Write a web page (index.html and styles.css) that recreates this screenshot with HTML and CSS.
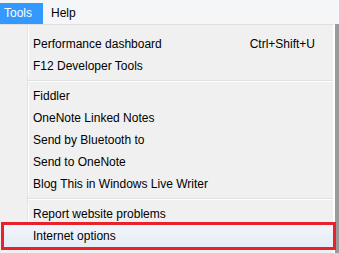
FILE: index.html
```html
<!DOCTYPE html>
<html>
<head>
<meta charset="utf-8">
<link rel="stylesheet" href="styles.css">
</head>
<body>
<div class="menubar">
  <span class="top-item active">Tools</span>
  <span class="top-item">Help</span>
</div>
<div class="menu-shadow">
  <div class="menu">
    <div class="item"><span>Performance dashboard</span><span class="shortcut">Ctrl+Shift+U</span></div>
    <div class="item"><span>F12 Developer Tools</span></div>
    <div class="sep"></div>
    <div class="item"><span>Fiddler</span></div>
    <div class="item"><span>OneNote Linked Notes</span></div>
    <div class="item"><span>Send by Bluetooth to</span></div>
    <div class="item"><span>Send to OneNote</span></div>
    <div class="item"><span>Blog This in Windows Live Writer</span></div>
    <div class="sep"></div>
    <div class="item"><span>Report website problems</span></div>
    <div class="item hover"><span>Internet options</span></div>
  </div>
</div>
</body>
</html>
```
FILE: styles.css
```css
html, body {
  margin: 0;
  padding: 0;
}
body {
  width: 339px;
  height: 253px;
  overflow: hidden;
  background: #a3a3a3;
  font-family: "Liberation Sans", Arial, sans-serif;
  font-size: 12px;
  color: #000;
}
.menubar {
  height: 24px;
  background: #f5f6f7;
  display: flex;
  align-items: flex-end;
}
.top-item {
  height: 21px;
  line-height: 21px;
  padding: 0 7px 0 4px;
}
.top-item.active {
  background: #3399ff;
  color: #fff;
  width: 32px;
}
.top-item + .top-item {
  padding-left: 8px;
}
.menu-shadow {
  padding: 0 4px 3px 0;
  background: linear-gradient(to right, #b8b8b8, #9a9a9a);
}
.menu {
  width: 333px;
  height: 225px;
  border-top: 1px solid #e0e0e0;
  border-right: 2px solid #ffffff;
  padding-top: 8px;
  background: linear-gradient(to right, #f0f0f0 0 27px, #e2e3e3 27px 28px, #ffffff 28px 29px, #f0f0f0 29px);
}
.item {
  height: 22px;
  margin: 0 0 0 4px;
  padding: 0 18px 0 29px;
  display: flex;
  align-items: center;
  justify-content: space-between;
  line-height: 22px;
}
.sep {
  height: 8px;
  margin-left: 28px;
  background: linear-gradient(#f0f0f0 0 3px, #e0e0e0 3px 4px, #ffffff 4px 5px, #f0f0f0 5px);
}
.item.hover {
  background: linear-gradient(#f2f5fa, #e6ecf6);
  outline: 3px solid #e8222b;
}
```
